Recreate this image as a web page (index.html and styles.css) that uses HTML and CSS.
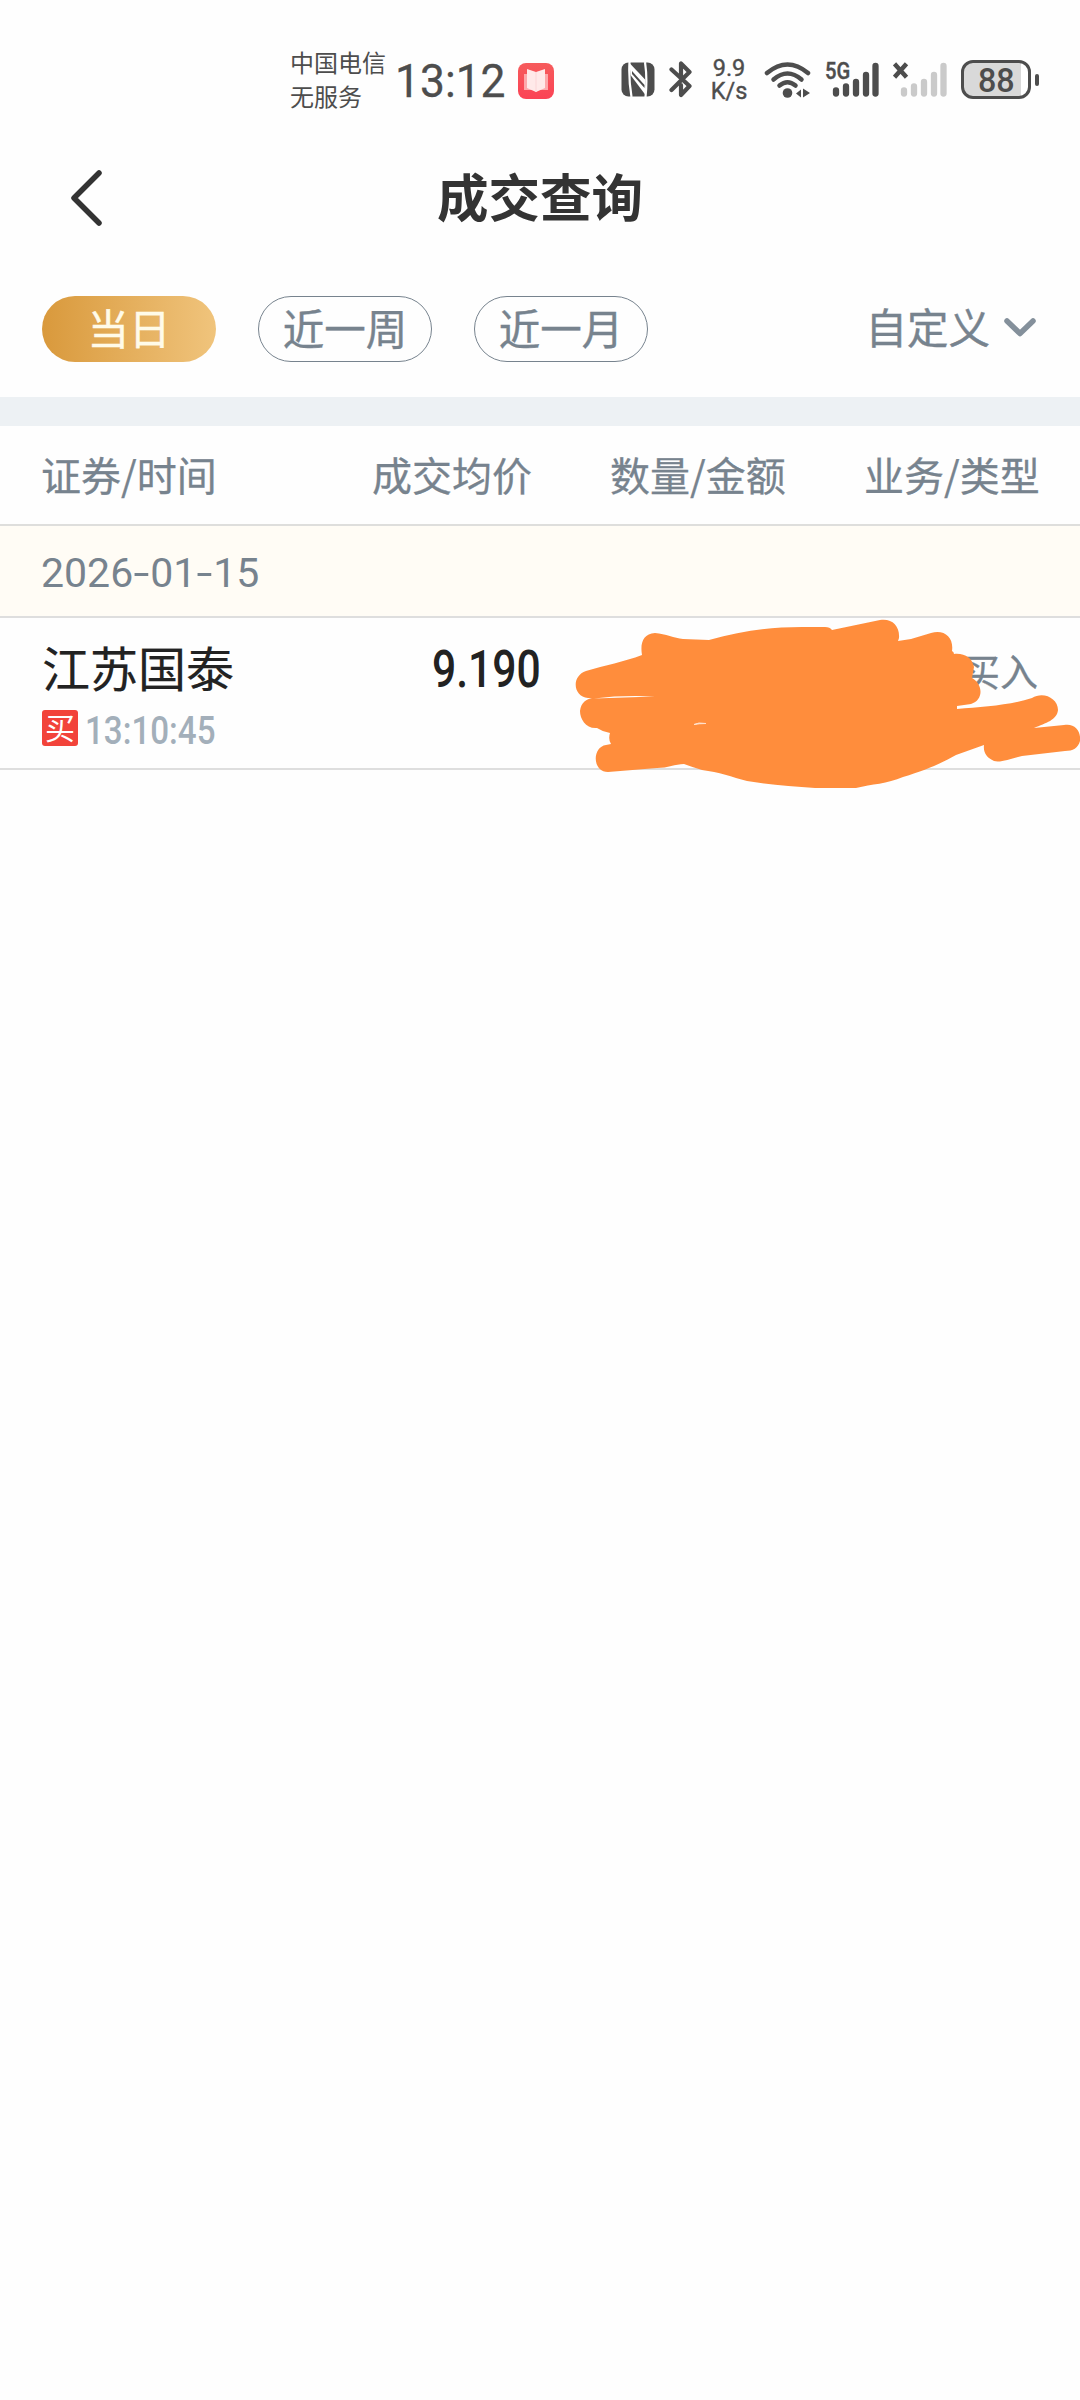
FILE: index.html
```html
<!DOCTYPE html>
<html lang="zh-CN">
<head>
<meta charset="utf-8">
<title>成交查询</title>
<link rel="stylesheet" href="styles.css">
</head>
<body>
<header class="status">
  <div class="carrier"><span>中国电信</span><span>无服务</span></div>
  <time class="clock"><span>13:12</span></time>
  <svg class="app" width="36" height="36" viewBox="0 0 36 36"><defs><linearGradient id="red" x2="0" y2="1"><stop stop-color="#f65b5c"/><stop offset="1" stop-color="#fb4355"/></linearGradient></defs><rect width="36" height="36" rx="8" fill="url(#red)"/><path d="M6 11H30V27H20L18 29L16 27H6Z" fill="#fda8ab"/><path d="M9 6L18 9L27 6V25L18 29L9 25Z" fill="#ffe9e9"/><path d="M18 9V29" stroke="#fbd5d7" stroke-width="1"/></svg>
  <svg class="nfc" width="34" height="35" viewBox="0 0 34 35"><rect x=".5" y=".5" width="33" height="34" rx="7" fill="#4d4d4d"/><path d="M8.500 0Q7.500 17 10.500 35M24 0Q26.500 17 24.500 35" fill="none" stroke="#fff" stroke-width="2.200"/><path d="M8.500 1L24.500 18V33L9.500 13Z" fill="#fff"/><path d="M11 9L23.500 23V26L11 12Z" fill="#4d4d4d"/></svg>
  <svg class="bt" width="24" height="37" viewBox="0 0 24 37"><path d="M2.500 8.500L20.500 25L12 34V24M2.500 29L20.500 11L12 2.500V17" fill="none" stroke="#4d4d4d" stroke-width="4.200" stroke-linecap="round" stroke-linejoin="round"/></svg>
  <div class="speed"><span>9.9</span><span>K/s</span></div>
  <svg class="wifi" width="48" height="38" viewBox="0 0 48 38"><g fill="none" stroke="#4d4d4d" stroke-width="4.500" stroke-linecap="round"><path d="M3 12Q23.500-5 44 12"/><path d="M9.500 18.500Q23.500 6.500 37.500 18.500"/><path d="M15.500 24.500Q23.500 18 31.500 24.500"/></g><circle cx="23.500" cy="32" r="4.800" fill="#4d4d4d"/><path d="M32 32.500L37 28.500V36.500ZM39 27.500L46 32L39 36.500Z" fill="#4d4d4d"/></svg>
  <div class="cell"><svg width="54" height="38" viewBox="0 0 54 38"><g stroke="#4d4d4d" stroke-width="6.300" stroke-linecap="round"><path d="M11 29.500V32.500M21 25.500V32.500M31 21V32.500M41 14V32.500M50.500 5V32.500"/></g></svg><span class="fiveg">5G</span></div>
  <svg class="cell2" width="54" height="38" viewBox="0 0 54 38"><g stroke="#cacaca" stroke-width="6.300" stroke-linecap="round"><path d="M11 29.500V32.500M21 25.500V32.500M31 21V32.500M41 14V32.500M50.500 5V32.500"/></g><path d="M3 4.500L12 14.500M12 4.500L3 14.500" stroke="#4d4d4d" stroke-width="4.500" stroke-linecap="square"/></svg>
  <div class="battery"><span>88</span></div><i class="nub"></i>
</header>
<nav class="title">
  <svg width="34" height="58" viewBox="0 0 34 58"><path d="M30 4L5 29L30 54" fill="none" stroke="#333" stroke-width="5.500" stroke-linecap="round" stroke-linejoin="round"/></svg>
  <h1>成交查询</h1>
</nav>
<section class="filters">
  <button class="pill active">当日</button><button class="pill">近一周</button><button class="pill">近一月</button>
  <div class="custom"><span>自定义</span><svg width="32" height="20" viewBox="0 0 32 20"><path d="M3 4L16 16.500L29 4" fill="none" stroke="#84909b" stroke-width="5.500" stroke-linecap="round" stroke-linejoin="round"/></svg></div>
</section>
<main>
  <div class="columns"><span>证券/时间</span><span>成交均价</span><span>数量/金额</span><span>业务/类型</span></div>
  <div class="date"><time>2026<i>-</i>01<i>-</i>15</time></div>
  <article class="trade">
    <div class="stock"><div class="name">江苏国泰</div><div class="when"><b>买</b><time>13:10:45</time></div></div>
    <div class="price"><span>9.190</span></div>
    <div class="kind">买入</div>
    <svg class="scribble" width="510" height="180" viewBox="570 615 510 180">
      <path fill="#ff8d3c" d="M642 655C640 643 643 634 655 633C666 634 674 638 683 639L709 640C742 631 769 627 802 627H825Q830 627 832 630L880 620C892 618 900 626 899 638L898 641L911 639L931 633C944 629 954 637 952 651Q954 652 954 654C965 653 972 658 974 667L972 678C983 684 984 700 971 704L957 706V709C983 707 1011 705 1032 698C1043 691 1058 698 1058 710C1057 720 1046 723 1034 728L1064 725C1075 723 1081 731 1080 741C1078 748 1073 751 1065 751L1022 756C1012 758 1001 763 994 761C987 758 983 753 984 745L956 755C940 764 926 770 903 777C887 784 872 784 856 788H815C792 786 770 785 747 781C732 777 719 772 702 770Q692 767 684 764C675 764 668 768 657 768L608 772C592 772 592 747 606 745L611 744Q608 739 610 733Q603 732 597 728C586 729 580 719 580 711C581 702 587 699 592 698H588C573 697 571 676 586 671C605 665 624 662 642 655Z"/>
      <path d="M594 698.500Q622 695 655 696.500Q623 697.500 594 698.500Z" fill="#fff"/><path d="M694 724.500Q698 722 706 723.500Q699 723.500 694 724.500Z" fill="#fff" stroke="#ffe1cc" stroke-width="1"/>
    </svg>
  </article>
</main>
</body>
</html>
```
FILE: styles.css
```css
* { box-sizing: border-box; }
body { margin: 0; width: 1080px; min-height: 2400px; background: #fefefe; color: #77838e; font-family: "Noto Sans CJK SC", sans-serif; }
svg { display: block; flex: none; }
.status { display: flex; align-items: flex-start; height: 136px; padding-left: 290px; color: #4d4d4d; white-space: nowrap; }
.carrier { display: flex; flex-direction: column; width: 105px; padding-top: 45px; font-size: 24px; line-height: 34px; }
.clock { width: 123px; margin-top: 54px; font: 46px/54px Roboto, sans-serif; -webkit-text-stroke: .3px #4d4d4d; }
.clock span { display: inline-block; transform: scaleX(.965); transform-origin: left; }
.app { margin-top: 63px; }
.nfc { margin: 62px 0 0 67px; }
.bt { margin: 61px 0 0 14px; }
.speed { display: flex; flex-direction: column; align-items: center; width: 38px; margin: 57px 0 0 17px; font: 23.5px/23px Roboto, sans-serif; -webkit-text-stroke: .4px #4d4d4d; }
.wifi { margin: 61px 0 0 16px; }
.cell { position: relative; margin: 61px 0 0 13px; }
.fiveg { position: absolute; left: 0; top: -2px; font: 500 24px/24px Roboto, sans-serif; transform: scaleX(.84); transform-origin: left; -webkit-text-stroke: .4px #4d4d4d; }
.cell2 { margin: 61px 0 0 14px; }
.battery { display: flex; align-items: center; justify-content: center; width: 70px; height: 39px; margin: 60px 0 0 14px; border: 3px solid #4d4d4d; border-radius: 12px; background: linear-gradient(90deg, #d9d9d9 57px, #fff 57px); font: 500 34px/34px Roboto, sans-serif; }
.battery span { transform: scaleX(.95); }
.nub { width: 4px; height: 12px; margin: 74px 0 0 4px; border-radius: 2px; background: #4d4d4d; }
.title { display: grid; grid-template-columns: 106px 1fr 106px; align-items: center; height: 124px; }
.title svg { margin-left: 69px; }
h1 { margin: -6px 0 0; text-align: center; color: #333; font-size: 51.5px; line-height: 70px; font-weight: 700; }
.filters { display: flex; align-items: flex-start; height: 137px; padding: 36px 44px 0 42px; gap: 42px; }
.pill { width: 174px; height: 66px; padding: 0 0 4px; border: 1px solid #77838e; border-radius: 33px; background: transparent; color: #77838e; font: 41.5px/60px "Noto Sans CJK SC", sans-serif; -webkit-text-stroke: .4px; }
.active { border: 0; color: #fffbe9; background: linear-gradient(90deg, #d9993c, #f0c47c); }
.custom { display: flex; align-items: center; gap: 14px; height: 62px; margin-left: auto; font-size: 41.5px; line-height: 60px; -webkit-text-stroke: .4px; }
.custom span { margin-top: -3px; }
.columns { display: grid; grid-template-columns: 331px 238px 254px 1fr; height: 129px; padding: 18px 0 0 41px; border-top: 29px solid #edf1f4; border-bottom: 2px solid #dededc; font-size: 40px; line-height: 60px; -webkit-text-stroke: .3px; }
.date { height: 92px; padding: 18px 0 0 41px; background: #fffcf5; border-bottom: 2px solid #dedede; font: 41px/58px Roboto, sans-serif; }
.date time { display: flex; }
.date i { width: 17px; font-style: normal; text-align: center; transform: scaleX(1.4); }
.price span, .when time { display: inline-block; transform-origin: left; }
.trade { position: relative; display: grid; grid-template-columns: 390px 530px 1fr; height: 152px; padding-left: 42px; border-bottom: 2px solid #dedede; }
.name { margin-top: 13px; height: 70px; color: #222; font-size: 48px; line-height: 70px; -webkit-text-stroke: .2px; }
.when { display: flex; align-items: center; height: 54px; gap: 7px; color: #a3afba; font: 500 39px/46px Roboto, sans-serif; }
.when b { width: 36px; height: 36px; margin-top: -1px; border-radius: 3px; background: #f2433a; color: #fff; font: 30px/33px "Noto Sans CJK SC", sans-serif; text-align: center; }
.when time { margin-top: 5px; transform: scaleX(.85); }
.price { padding-top: 21px; color: #222; font: 500 52px/62px Roboto, sans-serif; }
.price span { transform: scaleX(.82); }
.kind { padding-top: 22px; font-size: 38px; line-height: 60px; -webkit-text-stroke: .3px; }
.scribble { position: absolute; left: 570px; top: -3px; }
```
